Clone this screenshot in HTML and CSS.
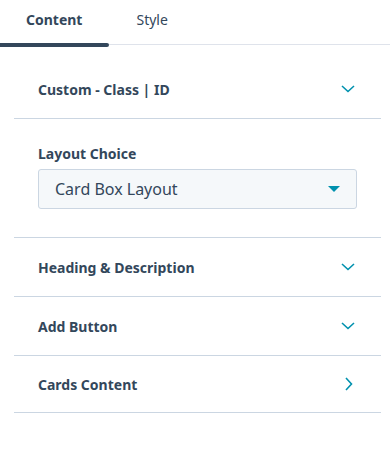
FILE: index.html
```html
<!DOCTYPE html>
<html lang="en">
<head>
    <meta charset="UTF-8">
    <meta name="viewport" content="width=device-width, initial-scale=1.0">
    <title>Module Editor</title>
    <link rel="stylesheet" href="styles.css">
</head>
<body>
    <div class="tabs">
        <div class="tab active">Content</div>
        <div class="tab">Style</div>
    </div>

    <div class="panel">
        <div class="row">
            <span class="row-title">Custom - Class | ID</span>
            <svg class="chevron" width="14" height="8" viewBox="0 0 14 8"><path d="M1 1l6 5.5L13 1" fill="none" stroke="#0091ae" stroke-width="1.6"/></svg>
        </div>

        <div class="field">
            <label class="field-label">Layout Choice</label>
            <div class="select">
                <span>Card Box Layout</span>
                <svg width="12" height="6" viewBox="0 0 12 6"><path d="M0 0h12L6 6z" fill="#0091ae"/></svg>
            </div>
        </div>

        <div class="row">
            <span class="row-title">Heading &amp; Description</span>
            <svg class="chevron" width="14" height="8" viewBox="0 0 14 8"><path d="M1 1l6 5.5L13 1" fill="none" stroke="#0091ae" stroke-width="1.6"/></svg>
        </div>
        <div class="row">
            <span class="row-title">Add Button</span>
            <svg class="chevron" width="14" height="8" viewBox="0 0 14 8"><path d="M1 1l6 5.5L13 1" fill="none" stroke="#0091ae" stroke-width="1.6"/></svg>
        </div>
        <div class="row last">
            <span class="row-title">Cards Content</span>
            <svg class="chevron right" width="8" height="14" viewBox="0 0 8 14"><path d="M1 1l5.5 6L1 13" fill="none" stroke="#0091ae" stroke-width="1.6"/></svg>
        </div>
    </div>
</body>
</html>
```

FILE: styles.css
```css
body {
    margin: 0;
    font-family: "Noto Sans", Arial, sans-serif;
    color: #33475b;
    background: #fff;
}
.tabs {
    display: flex;
    height: 44px;
    border-bottom: 1px solid #dfe3eb;
}
.tab {
    position: relative;
    padding: 10px 27px 0 27px;
    font-size: 14px;
    line-height: 20px;
}
.tab.active {
    font-weight: 700;
    padding-left: 26px;
}
.tab.active::after {
    content: "";
    position: absolute;
    left: 0;
    right: 0;
    bottom: -3px;
    height: 4px;
    background: #33475b;
    border-radius: 0 2px 2px 0;
}
.panel {
    margin: 15px 9px 0 14px;
}
.row {
    display: flex;
    align-items: center;
    justify-content: space-between;
    height: 58px;
    padding: 0 26px 0 24px;
    border-bottom: 1px solid #cbd6e2;
}
.row.last {
    height: 56px;
}
.row-title {
    font-size: 14px;
    font-weight: 700;
}
.chevron {
    display: block;
}
.chevron.right {
    margin-right: 2px;
}
.field {
    padding: 25px 24px 28px 24px;
    border-bottom: 1px solid #cbd6e2;
}
.field-label {
    display: block;
    font-size: 14px;
    font-weight: 700;
    line-height: 20px;
    margin-bottom: 5px;
}
.select {
    display: flex;
    align-items: center;
    justify-content: space-between;
    box-sizing: border-box;
    height: 40px;
    padding: 0 16px 0 16px;
    background: #f5f8fa;
    border: 1px solid #cbd6e2;
    border-radius: 3px;
    font-size: 16px;
}
```
